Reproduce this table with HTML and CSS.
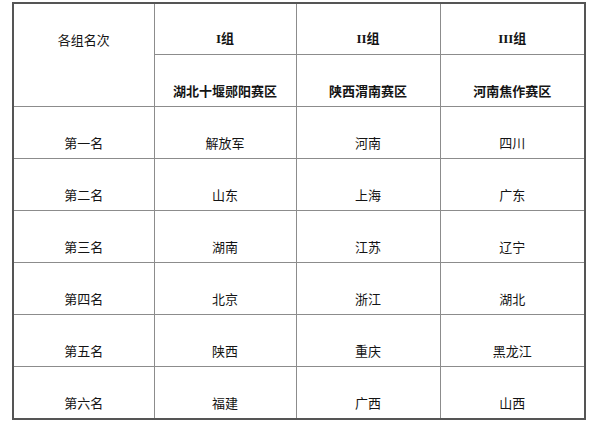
FILE: index.html
```html
<!DOCTYPE html>
<html lang="zh">
<head>
<meta charset="utf-8">
<link rel="stylesheet" href="styles.css">
</head>
<body>
<table class="rank">
  <colgroup>
    <col class="c1"><col class="c2"><col class="c3"><col class="c4">
  </colgroup>
  <tr class="h1">
    <td rowspan="2" class="corner">各组名次</td>
    <th><span class="roman">I</span>组</th>
    <th><span class="roman">II</span>组</th>
    <th><span class="roman">III</span>组</th>
  </tr>
  <tr class="h2">
    <th>湖北十堰郧阳赛区</th>
    <th>陕西渭南赛区</th>
    <th>河南焦作赛区</th>
  </tr>
  <tr><td>第一名</td><td>解放军</td><td>河南</td><td>四川</td></tr>
  <tr><td>第二名</td><td>山东</td><td>上海</td><td>广东</td></tr>
  <tr><td>第三名</td><td>湖南</td><td>江苏</td><td>辽宁</td></tr>
  <tr><td>第四名</td><td>北京</td><td>浙江</td><td>湖北</td></tr>
  <tr><td>第五名</td><td>陕西</td><td>重庆</td><td>黑龙江</td></tr>
  <tr><td>第六名</td><td>福建</td><td>广西</td><td>山西</td></tr>
</table>
</body>
</html>
```
FILE: styles.css
```css
html, body {
  margin: 0;
  padding: 0;
  background: #ffffff;
}
body {
  font-family: "Noto Sans CJK SC", "Liberation Sans", sans-serif;
  color: #141414;
  font-size: 13px;
}
.rank {
  margin: 2px 0 0 12px;
  border-collapse: collapse;
  table-layout: fixed;
  width: 572px;
  border: 2px solid #555555;
}
.c1 { width: 141px; }
.c2 { width: 142px; }
.c3 { width: 144px; }
.c4 { width: 145px; }
.rank td, .rank th {
  border: 1px solid #8c8c8c;
  text-align: center;
  vertical-align: bottom;
  padding: 0 0 6px 0;
  line-height: 18px;
  height: 52px;
  box-sizing: border-box;
}
.rank th {
  font-weight: bold;
}
.rank .h1 th {
  height: 51px;
}
.rank tr:last-child td {
  height: 53px;
}
.rank .corner {
  padding-bottom: 57px;
}
.roman {
  font-family: "Liberation Serif", serif;
  font-weight: bold;
}
```
